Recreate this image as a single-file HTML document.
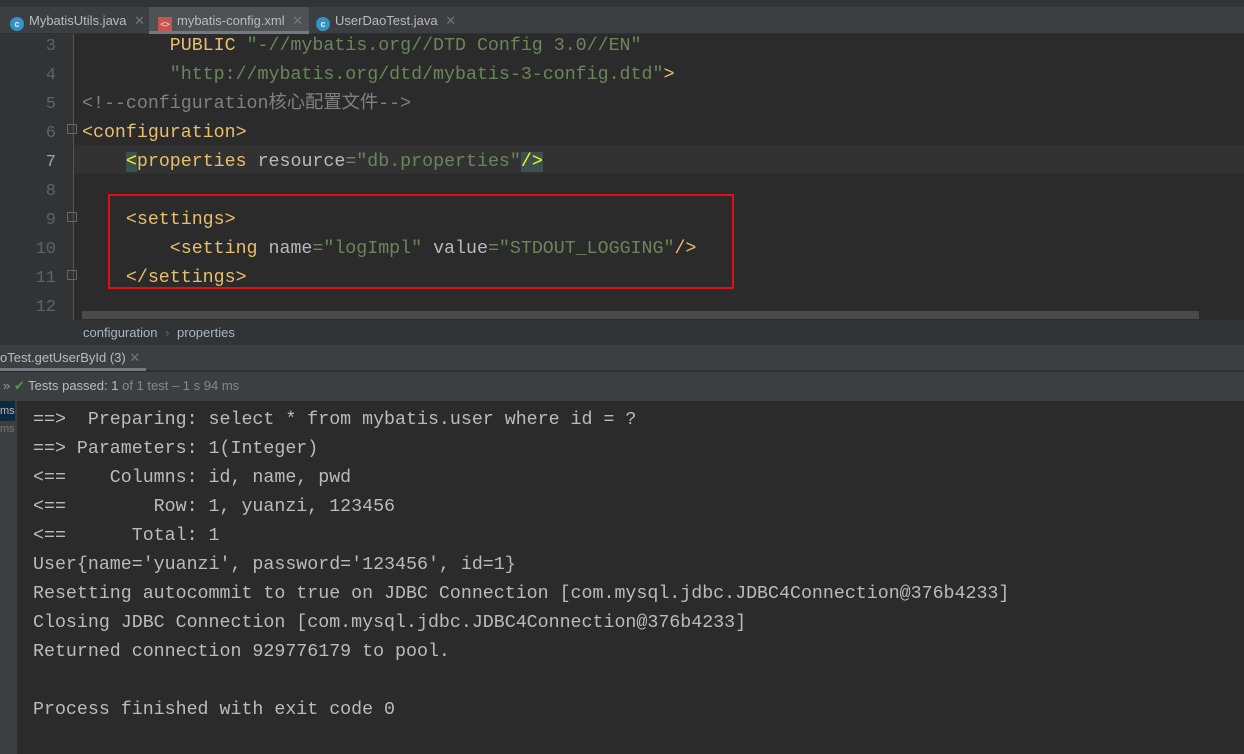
<!DOCTYPE html>
<html><head><meta charset="utf-8"><style>
*{margin:0;padding:0;box-sizing:border-box}
body{width:1244px;height:754px;overflow:hidden;background:#2b2b2b;position:relative;font-family:"Liberation Sans","Noto Sans CJK SC",sans-serif}
.abs{position:absolute}
.mono{font-family:"Liberation Mono","Noto Sans CJK SC",monospace;font-size:18.3px;white-space:pre}
.ln{position:absolute;left:0;width:56px;text-align:right;color:#606366;font-family:"Liberation Mono",monospace;font-size:17px;height:29px;line-height:29px}
.cl{position:absolute;left:82px;height:29px;line-height:29px}
.t{color:#e8bf6a}.a{color:#bababa}.s{color:#6a8759}.c{color:#808080}.p{color:#cc7832}
.tab{position:absolute;top:8px;height:27px;font-size:13px;color:#bbb;line-height:26px}
.ci{display:inline-block;width:14px;height:14px;border-radius:50%;background:#3592c4;color:#e0f0ff;font-size:9px;line-height:14px;text-align:center;vertical-align:-2px;margin-right:5px;font-weight:bold}
.cons{position:absolute;left:33px;color:#bbbbbb;height:29px;line-height:29px}
</style></head><body>
<div class="abs" style="top:0;left:0;width:1244px;height:7px;background:#313335"></div>
<div class="abs" style="top:7px;left:0;width:1244px;height:27px;background:#3c3f41;border-bottom:1px solid #323232"></div>
<div class="abs" style="top:7px;left:149px;width:160px;height:27px;background:#4e5254"></div>
<div class="abs" style="top:31px;left:149px;width:160px;height:3px;background:#747a80"></div>
<div class="tab" style="left:10px"><span class="ci">c</span>MybatisUtils.java <span style="color:#777;margin-left:4px">✕</span></div>
<div class="tab" style="left:158px"><span style="display:inline-block;width:14px;height:14px;background:#c75450;vertical-align:-2px;margin-right:5px;font-size:8px;color:#fff;text-align:center;line-height:16px">&lt;&gt;</span>mybatis-config.xml <span style="color:#777;margin-left:4px">✕</span></div>
<div class="tab" style="left:316px"><span class="ci">c</span>UserDaoTest.java <span style="color:#777;margin-left:4px">✕</span></div>

<div class="abs" style="top:34px;left:0;width:74px;height:286px;background:#313335"></div>
<div class="abs" style="top:34px;left:73px;width:1px;height:286px;background:#555"></div>
<div class="abs" style="top:145px;left:74px;width:1170px;height:29px;background:#323232"></div>

<div class="ln" style="top:32px">3</div>
<div class="ln" style="top:61px">4</div>
<div class="ln" style="top:90px">5</div>
<div class="ln" style="top:119px">6</div>
<div class="ln" style="top:148px;color:#a4a3a3">7</div>
<div class="ln" style="top:177px">8</div>
<div class="ln" style="top:206px">9</div>
<div class="ln" style="top:235px">10</div>
<div class="ln" style="top:264px">11</div>
<div class="ln" style="top:293px">12</div>

<div class="cl mono" style="top:32px"><span class="t">        PUBLIC </span><span class="s">"-//mybatis.org//DTD Config 3.0//EN"</span></div>
<div class="cl mono" style="top:61px"><span class="s">        "http://mybatis.org/dtd/mybatis-3-config.dtd"</span><span class="t">&gt;</span></div>
<div class="cl mono" style="top:90px"><span class="c">&lt;!--configuration核心配置文件--&gt;</span></div>
<div class="cl mono" style="top:119px"><span class="t">&lt;configuration&gt;</span></div>
<div class="cl mono" style="top:146px;padding-top:2px"><span class="t">    <span style="background:#3b514d;color:#ffef28">&lt;</span>properties </span><span class="a">resource</span><span class="s">="db.properties"</span><span style="background:#3b514d;color:#ffef28">/&gt;</span></div>
<div class="cl mono" style="top:206px"><span class="t">    &lt;settings&gt;</span></div>
<div class="cl mono" style="top:235px"><span class="t">        &lt;setting </span><span class="a">name</span><span class="s">="logImpl" </span><span class="a">value</span><span class="s">="STDOUT_LOGGING"</span><span class="t">/&gt;</span></div>
<div class="cl mono" style="top:264px"><span class="t">    &lt;/settings&gt;</span></div>
<div class="abs" style="top:194px;left:108px;width:626px;height:95px;border:2px solid #e01010"></div>
<div class="abs" style="top:124px;left:67px;width:10px;height:10px;border:1px solid #666"></div>
<div class="abs" style="top:212px;left:67px;width:10px;height:10px;border:1px solid #666"></div>
<div class="abs" style="top:270px;left:67px;width:10px;height:10px;border:1px solid #666"></div>

<div class="abs" style="top:311px;left:82px;width:1117px;height:8px;background:#4a4a4a"></div>
<div class="abs" style="top:320px;left:0;width:1244px;height:25px;background:#313335;border-top:1px solid #333"></div>
<div class="abs" style="top:324px;left:83px;font-size:13px;color:#a9b7c6;line-height:17px">configuration <span style="color:#666;margin:0 4px">›</span> properties</div>

<div class="abs" style="top:345px;left:0;width:1244px;height:26px;background:#3c3f41;border-bottom:1px solid #323232"></div>
<div class="abs" style="top:368px;left:0;width:146px;height:3px;background:#747a80"></div>
<div class="abs" style="top:350px;left:0;font-size:13px;color:#bbb">oTest.getUserById (3) <span style="color:#777">✕</span></div>
<div class="abs" style="top:372px;left:0;width:1244px;height:29px;background:#3c3f41"></div>
<div class="abs" style="top:378px;left:3px;font-size:13px;color:#bbb"><span style="color:#999">»</span> <span style="color:#499c54">✔</span> Tests passed: 1 <span style="color:#888">of 1 test – 1 s 94 ms</span></div>

<div class="abs" style="top:401px;left:0;width:17px;height:353px;background:#3c3f41"></div>
<div class="abs" style="top:401px;left:0;width:15px;height:20px;background:#0d293e;color:#bbb;font-size:11px;line-height:20px;overflow:hidden">ms</div>
<div class="abs" style="top:423px;left:0;width:15px;font-size:11px;color:#777;overflow:hidden">ms</div>

<div class="cons mono" style="top:406px">==&gt;  Preparing: select * from mybatis.user where id = ?</div>
<div class="cons mono" style="top:435px">==&gt; Parameters: 1(Integer)</div>
<div class="cons mono" style="top:464px">&lt;==    Columns: id, name, pwd</div>
<div class="cons mono" style="top:493px">&lt;==        Row: 1, yuanzi, 123456</div>
<div class="cons mono" style="top:522px">&lt;==      Total: 1</div>
<div class="cons mono" style="top:551px">User{name='yuanzi', password='123456', id=1}</div>
<div class="cons mono" style="top:580px">Resetting autocommit to true on JDBC Connection [com.mysql.jdbc.JDBC4Connection@376b4233]</div>
<div class="cons mono" style="top:609px">Closing JDBC Connection [com.mysql.jdbc.JDBC4Connection@376b4233]</div>
<div class="cons mono" style="top:638px">Returned connection 929776179 to pool.</div>
<div class="cons mono" style="top:696px">Process finished with exit code 0</div>
</body></html>
